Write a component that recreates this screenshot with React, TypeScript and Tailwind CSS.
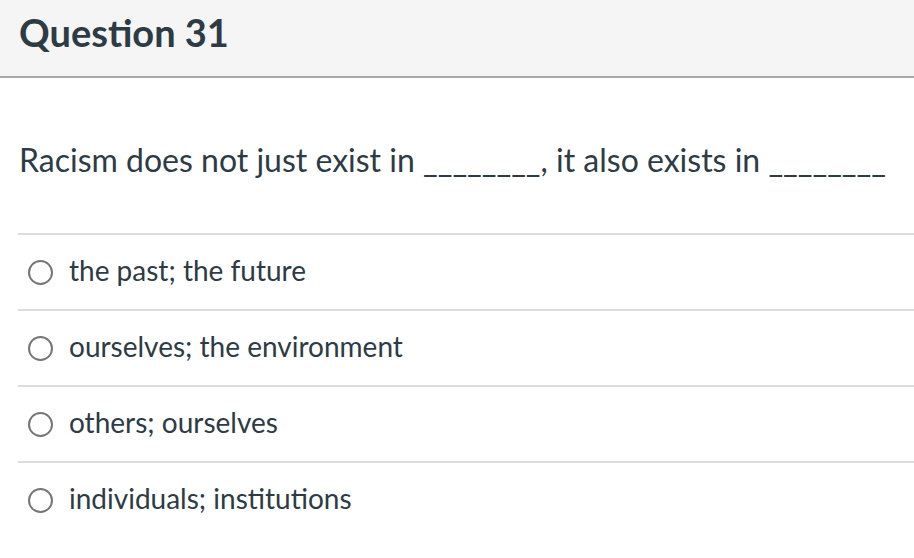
import React from 'react';

const options = [
  'the past; the future',
  'ourselves; the environment',
  'others; ourselves',
  'individuals; institutions',
];

export default function App() {
  return (
    <div className="w-[914px] h-[558px] bg-white overflow-hidden text-[#2d3b45]" style={{ fontFamily: 'Lato, "Open Sans", sans-serif' }}>
      {/* Question header */}
      <div className="h-[78px] bg-[#f5f5f5] border-b-2 border-[#a8a8a8] pl-[19px] flex items-start pt-[7px]">
        <h2 className="text-[38px] font-bold leading-[50px]">Question 31</h2>
      </div>

      {/* Prompt */}
      <div className="pl-[19px] pt-[62px] pb-[53px]">
        <p className="text-[32px] leading-[40px]">
          Racism does not just exist in ________, it also exists in ________
        </p>
      </div>

      {/* Answers */}
      <div className="ml-[18px]">
        {options.map((opt) => (
          <div key={opt} className="h-[76px] border-t-2 border-[#dddddd] flex items-center pl-[10px] gap-[16px]">
            <span className="w-[25px] h-[25px] rounded-full border-2 border-[#767676] bg-white shrink-0" />
            <span className="text-[28px] leading-[34px] -mt-[4px]">{opt}</span>
          </div>
        ))}
      </div>
    </div>
  );
}
